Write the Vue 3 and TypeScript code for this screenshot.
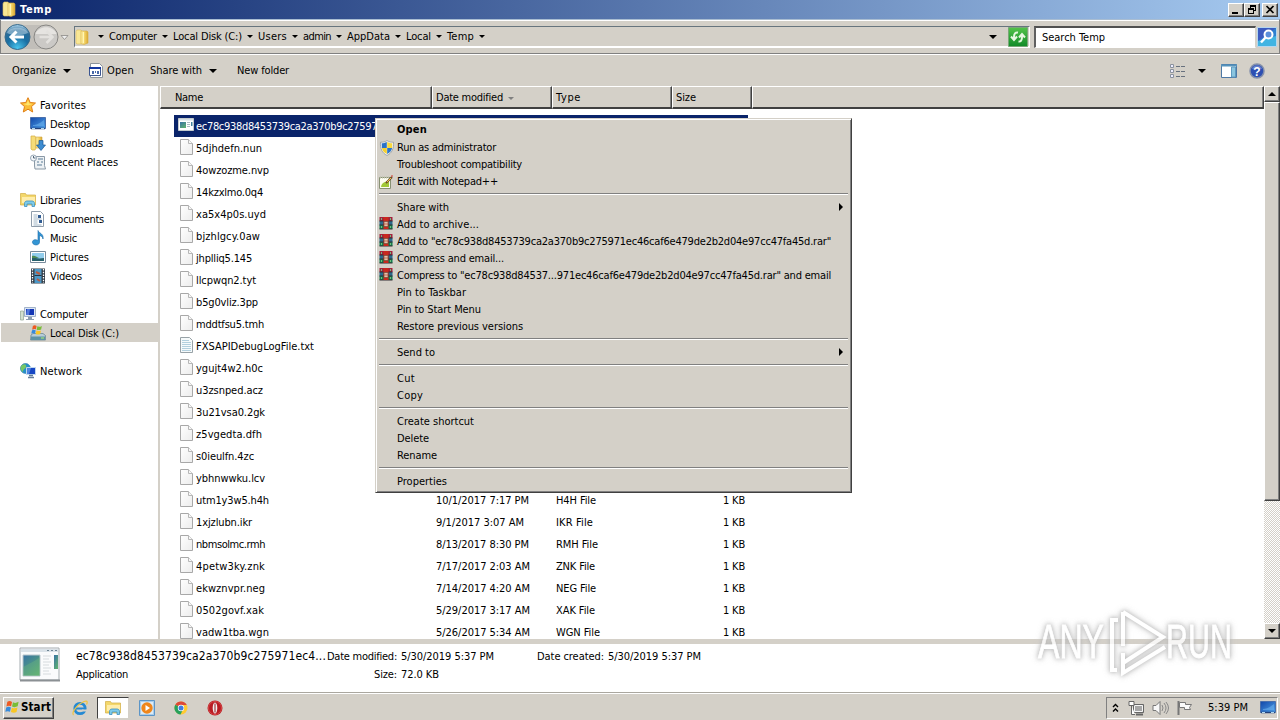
<script setup lang="ts">
interface Entry { name: string; w: number; icon: string; date?: string; dw?: number; type?: string; tw?: number }
interface Place { name: string; w: number; icon: string; child?: boolean; active?: boolean; gap?: boolean }
interface Item { label?: string; w?: number; icon?: string; bold?: boolean; arrow?: boolean; sep?: boolean }

// Spreads letters so that a label takes exactly the requested width.
const vFit = {
  mounted(el: HTMLElement, binding: { value: number }) {
    const range = document.createRange()
    range.selectNodeContents(el)
    const natural = range.getBoundingClientRect().width
    const count = (el.textContent ?? '').length
    if (count) el.style.letterSpacing = `${(binding.value - natural) / count}px`
  },
}

const crumbs = [
  { t: 'Computer', w: 48 }, { t: 'Local Disk (C:)', w: 69 }, { t: 'Users', w: 29 }, { t: 'admin', w: 28 },
  { t: 'AppData', w: 43 }, { t: 'Local', w: 25 }, { t: 'Temp', w: 27 },
]

const places: Place[] = [
  { name: 'Favorites', w: 46, icon: 'star' },
  { name: 'Desktop', w: 40, icon: 'desktop', child: true },
  { name: 'Downloads', w: 53, icon: 'downloads', child: true },
  { name: 'Recent Places', w: 68, icon: 'recent', child: true },
  { name: 'Libraries', w: 41, icon: 'library', gap: true },
  { name: 'Documents', w: 54, icon: 'document', child: true },
  { name: 'Music', w: 27, icon: 'music', child: true },
  { name: 'Pictures', w: 39, icon: 'picture', child: true },
  { name: 'Videos', w: 32, icon: 'video', child: true },
  { name: 'Computer', w: 48, icon: 'computer', gap: true },
  { name: 'Local Disk (C:)', w: 69, icon: 'disk', child: true, active: true },
  { name: 'Network', w: 42, icon: 'network', gap: true },
]

const files: Entry[] = [
  { name: 'ec78c938d8453739ca2a370b9c275971e', w: 193, icon: 'program' },
  { name: '5djhdefn.nun', w: 66, icon: 'blank' },
  { name: '4owzozme.nvp', w: 73, icon: 'blank' },
  { name: '14kzxlmo.0q4', w: 67, icon: 'blank' },
  { name: 'xa5x4p0s.uyd', w: 70, icon: 'blank' },
  { name: 'bjzhlgcy.0aw', w: 64, icon: 'blank' },
  { name: 'jhplliq5.145', w: 56, icon: 'blank' },
  { name: 'llcpwqn2.tyt', w: 60, icon: 'blank' },
  { name: 'b5g0vliz.3pp', w: 62, icon: 'blank' },
  { name: 'mddtfsu5.tmh', w: 68, icon: 'blank' },
  { name: 'FXSAPIDebugLogFile.txt', w: 118, icon: 'text' },
  { name: 'ygujt4w2.h0c', w: 67, icon: 'blank' },
  { name: 'u3zsnped.acz', w: 67, icon: 'blank' },
  { name: '3u21vsa0.2gk', w: 69, icon: 'blank' },
  { name: 'z5vgedta.dfh', w: 66, icon: 'blank' },
  { name: 's0ieulfn.4zc', w: 58, icon: 'blank' },
  { name: 'ybhnwwku.lcv', w: 69, icon: 'blank' },
  { name: 'utm1y3w5.h4h', w: 73, icon: 'blank', date: '10/1/2017 7:17 PM', dw: 93, type: 'H4H File', tw: 40 },
  { name: '1xjzlubn.ikr', w: 56, icon: 'blank', date: '9/1/2017 3:07 AM', dw: 88, type: 'IKR File', tw: 37 },
  { name: 'nbmsolmc.rmh', w: 69, icon: 'blank', date: '8/13/2017 8:30 PM', dw: 93, type: 'RMH File', tw: 42 },
  { name: '4petw3ky.znk', w: 69, icon: 'blank', date: '7/17/2017 2:03 AM', dw: 94, type: 'ZNK File', tw: 39 },
  { name: 'ekwznvpr.neg', w: 69, icon: 'blank', date: '7/14/2017 4:20 AM', dw: 94, type: 'NEG File', tw: 40 },
  { name: '0502govf.xak', w: 68, icon: 'blank', date: '5/29/2017 3:17 AM', dw: 94, type: 'XAK File', tw: 39 },
  { name: 'vadw1tba.wgn', w: 73, icon: 'blank', date: '5/26/2017 5:34 AM', dw: 94, type: 'WGN File', tw: 44 },
]

const menu: Item[] = [
  { label: 'Open', w: 30, bold: true },
  { label: 'Run as administrator', w: 99, icon: 'shield' },
  { label: 'Troubleshoot compatibility', w: 125 },
  { label: 'Edit with Notepad++', w: 101, icon: 'notepad' },
  { sep: true },
  { label: 'Share with', w: 52, arrow: true },
  { label: 'Add to archive...', w: 82, icon: 'rar' },
  { label: 'Add to "ec78c938d8453739ca2a370b9c275971ec46caf6e479de2b2d04e97cc47fa45d.rar"', w: 434, icon: 'rar' },
  { label: 'Compress and email...', w: 107, icon: 'rar' },
  { label: 'Compress to "ec78c938d84537...971ec46caf6e479de2b2d04e97cc47fa45d.rar" and email', w: 434, icon: 'rar' },
  { label: 'Pin to Taskbar', w: 69 },
  { label: 'Pin to Start Menu', w: 84 },
  { label: 'Restore previous versions', w: 126 },
  { sep: true },
  { label: 'Send to', w: 38, arrow: true },
  { sep: true },
  { label: 'Cut', w: 18 },
  { label: 'Copy', w: 26 },
  { sep: true },
  { label: 'Create shortcut', w: 77 },
  { label: 'Delete', w: 32 },
  { label: 'Rename', w: 40 },
  { sep: true },
  { label: 'Properties', w: 50 },
]
</script>

<template>
  <div class="screen">
    <svg class="defs" width="0" height="0" aria-hidden="true">
      <defs>
        <linearGradient id="gFolder" x1="0" x2="1"><stop offset="0" stop-color="#fff2a8" /><stop offset=".5" stop-color="#f3d468" /><stop offset="1" stop-color="#dba832" /></linearGradient>
        <linearGradient id="gBlue" x1="0" x2="1" y2="1"><stop offset="0" stop-color="#1247a8" /><stop offset="1" stop-color="#4da0e8" /></linearGradient>
        <linearGradient id="gGreen" y2="1" x2="0"><stop offset="0" stop-color="#53c34a" /><stop offset="1" stop-color="#118a28" /></linearGradient>
        <radialGradient id="gBack" cy=".95" r=".9"><stop offset="0" stop-color="#49c6ef" /><stop offset=".5" stop-color="#1a6fa3" /><stop offset=".8" stop-color="#2a6c98" /><stop offset="1" stop-color="#9ac4df" /></radialGradient>
        <linearGradient id="gPaper" x2="1" y2="1"><stop offset="0" stop-color="#fff" /><stop offset="1" stop-color="#ececec" /></linearGradient>
        <linearGradient id="gApp" x2=".7" y2="1"><stop offset="0" stop-color="#3873a5" /><stop offset="1" stop-color="#5cad72" /></linearGradient>
      </defs>
      <symbol id="folder" viewBox="0 0 16 16"><path d="M2 2.500 3 1h4l1 2v11l-1 1H3l-1-1z" fill="#f9e795" stroke="#dcbd5b" stroke-width=".6" /><path d="M7 2h6l1 1v11l-4 1.500-3-.7z" fill="url(#gFolder)" stroke="#d3ab40" stroke-width=".6" /><path d="M9.500 3v11" stroke="#fff5b5" /></symbol>
      <symbol id="star" viewBox="0 0 16 16"><path d="m8 .7 2.200 4.800 5.300.5-4 3.600 1.200 5.400L8 12.200 3.300 15l1.200-5.400-4-3.600 5.300-.5z" fill="#fbbd38" stroke="#e07f16" /><path d="m8 3 1.300 3.600 3.500.3-4.800 1.600-4.700-1.600 3.400-.3z" fill="#ffe56c" /></symbol>
      <symbol id="desktop" viewBox="0 0 16 16"><path d="M.5 1.500h15v11H.5z" fill="url(#gBlue)" stroke="#4a6fab" /><path d="M3 9c3 0 6-1 11-5v6H3z" fill="#6fb5ee" opacity=".55" /><path d="M1 12.500h14" stroke="#24427c" stroke-width="1.500" /><path d="M2 12.500h3m6 0h3" stroke="#b3d9ef" /></symbol>
      <symbol id="downloads" viewBox="0 0 16 16"><path d="M1 1h4l1 2v10l-1 2H2l-1-1z" fill="#f6dc78" stroke="#d4ad43" stroke-width=".7" /><path d="M6 2h6v11H6z" fill="url(#gFolder)" stroke="#d0a440" stroke-width=".6" /><path d="M9 5.500h4V10h2.500L11 15.500 6.500 10H9z" fill="#3d8cd1" stroke="#185795" stroke-width=".7" /></symbol>
      <symbol id="recent" viewBox="0 0 16 16"><path d="M4.500 2.500h10v9l1 3.500H5l-.5-3z" fill="#edf1f4" stroke="#8a99a6" /><circle cx="3.500" cy="4" r="3" fill="#f4f7fa" stroke="#98a7b5" /><path d="M3.500 2v2h2" fill="none" stroke="#506577" /><path d="M8 5h5M7 8h2m2 0h2M7 11h5" stroke="#8ba3b5" stroke-width="1.500" /></symbol>
      <symbol id="library" viewBox="0 0 16 16"><path d="M.5 1.500h5l1 1.500h9V13H.5z" fill="#f3d76b" stroke="#d3ad45" stroke-width=".7" /><path d="M2 5h13v6H2z" fill="#ffedaa" /><path d="M4.500 14.500v-3c0-1.500 1-2.500 2.500-2.500h5c1.500 0 2.500 1 2.500 2.500v3h-2.500V12h-5v2.500z" fill="#7ecbe9" stroke="#3d90c2" stroke-width=".8" /></symbol>
      <symbol id="document" viewBox="0 0 16 16"><path d="M1.500.5h9l3 3v12h-12z" fill="#fff" stroke="#8f9dab" /><path d="M3.500 4h4m-4 2h4m-4 2h8m-8 2h4m-4 2h4m-4 2h8" stroke="#8ba4b9" stroke-width=".8" /><path d="M8 4h3v3H8zm1 5h3v3H9z" fill="#315c93" /></symbol>
      <symbol id="music" viewBox="0 0 16 16"><path d="M8 .5c1 3 6 3 5 8.500-.5-2.500-2-3-3.500-3.500V12c0 4.500-8 3.500-7-.5.500-2 3.500-2.500 5.500-1z" fill="#3395d4" stroke="#1769a8" stroke-width=".6" /></symbol>
      <symbol id="picture" viewBox="0 0 16 16"><path d="M.5 2.500h15v11H.5z" fill="#fff" stroke="#788b9b" /><path d="M2 4h12v8H2z" fill="#92cdec" /><path d="M2 8c4 1 6 2 12 1v3H2z" fill="#27616c" /><path d="M2 7c3-1 4 1 7 2H2z" fill="#4e8b53" /></symbol>
      <symbol id="video" viewBox="0 0 16 16"><path d="M1 .5h14v15H1z" fill="#303a45" /><path d="M4.500 1h7v14h-7z" fill="#4b98c8" /><path d="M4.500 7.500h7" stroke="#29323e" /><path d="m6 4 4 2M7 11l3 2" stroke="#b85c42" stroke-width="2" /><path d="M2.500 1v14M13.500 1v14" stroke="#fff" stroke-width="1.300" stroke-dasharray="1.500 1.200" /></symbol>
      <symbol id="computer" viewBox="0 0 16 16"><path d="M.5 5h3v9h-3z" fill="#d3e0d0" stroke="#8fa593" stroke-width=".7" /><path d="M4.500 1.500h11v9h-11z" fill="#dbe6f5" stroke="#a3b3c9" /><path d="M6 3h8v6H6z" fill="#1436b5" /><path d="M7 3h3L9 9H6z" fill="#5179dc" /><path d="M8 11h4v2h2v1H6v-1h2z" fill="#8b9db1" /></symbol>
      <symbol id="flag" viewBox="0 0 16 16"><path d="M2.500 2.500C5 1 6 2 7.500 2.700L6.500 7.300C5 6.600 3.500 6.500 1.500 7.500z" fill="#ee5a22" /><path d="M8.500 3c2 1 3.500.8 6-.5l-1 4.800c-2 1-4 1.200-6 .2z" fill="#79bd37" /><path d="M1.300 8.500c2-1 3.500-.8 5 0l-1 4.500C4 12.300 2.300 12.200.3 13z" fill="#368bdc" /><path d="M7.300 8.700c2 .9 4 .7 6-.2l-1 4.800c-2 1-4 .9-6-.1z" fill="#f9c623" /></symbol>
      <symbol id="disk" viewBox="0 0 16 16"><path d="M1 10 3 8.500h10l2.500 2v4.500H.5z" fill="#b7ccd8" stroke="#607f8e" stroke-width=".7" /><path d="M1 11.500h14V15H1z" fill="#5e93a5" /><path d="M11 13h3" stroke="#aef26b" /><use href="#flag" x="1" y="-1" width="12" height="12" /></symbol>
      <symbol id="network" viewBox="0 0 16 16"><circle cx="5.500" cy="5.500" r="5" fill="#258fc9" stroke="#2876a7" stroke-width=".6" /><path d="M2 2c3-2 5 0 4 2S3 6 3 9C0 7 0 4 2 2" fill="#76c765" /><path d="M6.500 4.500h9v7h-9z" fill="#1747c4" stroke="#c0d7ee" /><path d="m7 5 4 0-2 6H7z" fill="#4c83e0" /><path d="M9 12.500h4M8 14.500h6" stroke="#667f9b" stroke-width="1.500" /></symbol>
      <symbol id="blank" viewBox="-1 0 16 16"><path d="M1.500.5h8l4 4v11h-12z" fill="url(#gPaper)" stroke="#a8a8a8" /><path d="M9.500.5v4h4" fill="#f8f8f8" stroke="#b7b7b7" /></symbol>
      <symbol id="text" viewBox="-1 0 16 16"><path d="M1.500.5h9l3 3v12h-12z" fill="#f6fafb" stroke="#98a2a7" /><path d="M3 3.500h7m-7 2h9m-9 2h9m-9 2h9m-9 2h9m-9 2h9" stroke="#b3d0de" /></symbol>
      <symbol id="program" viewBox="0 0 16 16"><path d="M.5 1.500h15v12H.5z" fill="#fff" stroke="#c3cacd" /><path d="M1 2h14v1.500H1z" fill="#d5e0e5" /><path d="M2 5h6v6H2z" fill="url(#gApp)" /><path d="M9 5.500h3m-3 2h3m-3 2h3" stroke="#aabac2" /><path d="M13 5h1.500v4H13z" fill="#4385a0" /></symbol>
      <symbol id="shield" viewBox="0 0 16 16"><path d="M8 .6c2 1.300 4 1.700 6.500 1.600.5 6-1.500 11-6.500 13.200C3 13.200 1 8.200 1.500 2.200 4 2.300 6 1.900 8 .6z" fill="#f4f5f5" stroke="#848b90" stroke-width=".7" /><path d="M7.800 2C6 3 4.500 3.300 2.700 3.300L2.900 8h4.900z" fill="#2a72c7" /><path d="M8.200 2c1.800 1 3.300 1.300 5.100 1.300L13.100 8H8.200z" fill="#f9d83c" /><path d="M2.900 8h4.900v6C5 12.700 3.300 10.500 2.900 8z" fill="#f5d02f" /><path d="M8.200 8h4.900c-.4 2.500-2.100 4.700-4.900 6z" fill="#2c75c8" /></symbol>
      <symbol id="notepad" viewBox="0 0 14 14"><path d="M.5 2.500h11v11H.500z" fill="#fcfdf0" stroke="#889174" /><path d="M2 12c1-5 4-5 8-6v6z" fill="#a2c938" /><path d="M1 2.500h10" stroke="#b8bca5" stroke-width="2" stroke-dasharray="1 1" /><path d="m7 8 6-6" stroke="#704d26" stroke-width="2" /><path d="m8 7 4-4" stroke="#f3bd4d" /><path d="m12 1 1-1 1 1-1 1z" fill="#d43c33" /></symbol>
      <symbol id="rar" viewBox="0 0 14 13"><path d="M.5 0h13v4H.5z" fill="#a3213c" /><path d="M.5 4h13v4H.5z" fill="#2a6a8c" /><path d="M.5 8h13v4H.5z" fill="#128050" /><path d="M.5 4h13M.5 8h13M.5 12h13" stroke="#332d32" /><path d="M4.500 0h5v12h-5z" fill="#c9281d" /><path d="M5 4.500h4v5H5z" fill="#f3e6d8" stroke="#5d3b25" stroke-width=".6" /><path d="M6 5.500v3m2-3v3" stroke="#b64829" /><path d="M2.500 1v2m9-2v2m-9 6v2m9-2v2" stroke="#73ba7b" /></symbol>
      <symbol id="bigapp" viewBox="0 0 42 36"><path d="M1 1h39v32H1z" fill="#fafbfc" stroke="#a5acb0" /><path d="M1 33.500h40" stroke="#8b9094" stroke-width="2" /><path d="M2 2h37v3H2z" fill="#dae2e8" /><path d="M28 3.500h2m2 0h2m2 0h2" stroke="#6d8494" /><path d="M4 8h17v21H4z" fill="url(#gApp)" stroke="#b9c6cc" /><path d="M4 20C9 17 15 15 21 10v19H4z" fill="#71bb7f" opacity=".35" /><path d="M24 9h8m-8 3h6m-6 3h8m-8 3h6m-6 3h8m-8 3h6m-6 3h8" stroke="#d6dbde" /><path d="M35 8h4v14h-4z" fill="url(#gApp)" /></symbol>
      <symbol id="ie" viewBox="0 0 16 16"><circle cx="8" cy="8.500" r="5.200" fill="none" stroke="#2489d3" stroke-width="2.800" /><path d="M4 8.500h9" stroke="#2489d3" stroke-width="2" /><path d="M10 10.500h5" stroke="#d4d0c8" stroke-width="2" /><path d="M1.500 15C-1 12 6 4 12 1.500c4-1.500 3.500 1 2.500 3" fill="none" stroke="#eec340" stroke-width="1.200" /></symbol>
      <symbol id="player" viewBox="0 0 16 16"><path d="M.5.500h15v15H.5z" fill="#a9cdeb" stroke="#5c95c7" /><path d="M2 2h12v12H2z" fill="#dcebf6" /><circle cx="8" cy="8" r="5.700" fill="#ef861b" /><path d="m6.500 5 4.500 3-4.500 3z" fill="#fff" /></symbol>
      <symbol id="chrome" viewBox="0 0 16 16"><circle cx="8" cy="8" r="6.500" fill="#ffca32" /><path d="M8 8 2.300 4.700A6.500 6.500 0 0 1 13.800 5H8z" fill="#dd4938" /><path d="M2.300 4.700A6.500 6.500 0 0 0 7.500 14.500L10 9.500 8 8z" fill="#27a05b" /><circle cx="8" cy="8" r="3.200" fill="#fff" /><circle cx="8" cy="8" r="2.500" fill="#417dde" /></symbol>
      <symbol id="opera" viewBox="0 0 16 16"><circle cx="8" cy="8" r="7.500" fill="#b91b22" /><circle cx="8" cy="8" r="6.500" fill="none" stroke="#dc5352" stroke-width=".8" /><ellipse cx="8" cy="8" rx="2.300" ry="5.500" fill="#f3eeee" /><path d="M8 3.500v9" stroke="#8b1b20" stroke-width="1" /></symbol>
    </svg>

    <header class="title">
      <svg class="i16"><use href="#folder" /></svg>
      <span v-fit="32" class="bold">Temp</span>
      <div class="winbtns">
        <i class="wb"><svg width="10" height="9"><path d="M1 7h6v2H1z" /></svg></i>
        <i class="wb"><svg width="10" height="9"><path d="M3 0h6v2H4v1H3zm5 2h1v4H7V5h1zM1 3h6v2H2v3h4V5h1v4H1z" /></svg></i>
        <i class="wb close"><svg width="10" height="9"><path d="m1.500 1 7 7m0-7-7 7" stroke="#000" stroke-width="1.700" /></svg></i>
      </div>
    </header>

    <section class="nav">
      <svg class="round" width="72" height="30" viewBox="0 0 72 30">
        <path d="M17 3h30q-5 12 0 24H17z" fill="#c1beb9" />
        <circle cx="17" cy="15" r="12.500" fill="url(#gBack)" stroke="#386a8b" />
        <path d="M6.500 11C9 4 25 4 27.500 11 20 14 13 14 6.500 11z" fill="#dcecf6" opacity=".45" />
        <path d="M16 9.500 10.500 15l5.500 5.500M11 15h12.500" fill="none" stroke="#fff" stroke-width="3" />
        <circle cx="45.500" cy="15" r="12" fill="#cbc9c6" stroke="#888784" />
        <path d="M35 12c3-9 18-9 21 0z" fill="#e6e4e1" /><path d="m46 9 6 6-6 6m5-6H39" fill="none" stroke="#e3e1de" stroke-width="2.500" />
        <path d="M60.500 13.500h7L64 17.500z" fill="#eee" stroke="#8b8986" stroke-width=".8" />
      </svg>
      <div class="address">
        <svg class="i16"><use href="#folder" /></svg>
        <i class="down first"></i>
        <template v-for="c in crumbs" :key="c.t"><span v-fit="c.w" class="crumb" :style="{ width: c.w + 'px' }">{{ c.t }}</span><i class="down"></i></template>
        <i class="down large end"></i>
      </div>
      <svg class="refresh" width="21" height="20"><path d="M.5.500h19v19H.5z" fill="url(#gGreen)" stroke="#78a777" /><path d="M10 5.500Q6 5 6 10v2m-3-2.500 3 3.500 3-3.500M10.500 14.500Q14 15 14 10V8m-3 2.500L14 7l3 3.500" fill="none" stroke="#e5f7df" stroke-width="2" /></svg>
      <div class="search"><span v-fit="63">Search Temp</span></div>
      <svg class="find" width="20" height="20"><path d="M.5.500h19v19H.5z" fill="#2e80d0" stroke="#b5d6ee" /><path d="M1 1h18L1 14z" fill="#3c5bbf" /><path d="M1 14 19 9v10H1z" fill="#42b4e2" /><circle cx="11.500" cy="7.500" r="4" fill="#5b8fdb" stroke="#fff" stroke-width="2" /><path d="m8.500 10.500-4.500 5" stroke="#fff" stroke-width="2.500" /></svg>
    </section>

    <section class="toolbar">
      <span v-fit="44" class="organize">Organize</span><i class="down large"></i>
      <svg class="openicon" width="14" height="15"><path d="M1.500.5h9l3 3v11h-12z" fill="#fff" stroke="#8c949b" /><path d="M.5 4.500h11v8H.5z" fill="#fff" stroke="#3a5590" /><path d="M0 5h12" stroke="#1438a0" stroke-width="2" /><path d="M3 8h2v3H3zm3 0h1v2H6zm2 0h2v3H8z" fill="#4768a8" /></svg>
      <span v-fit="27" class="topen">Open</span>
      <span v-fit="52" class="share">Share with</span><i class="down large"></i>
      <span v-fit="52" class="newf">New folder</span>
      <div class="tools">
        <svg width="16" height="14"><path d="M.5.500h3v3h-3zm0 5h3v3h-3zm0 5h3v3h-3z" fill="#eef" stroke="#8b929f" /><path d="M6 2.500h4m1 0h4M6 7.500h4m1 0h4M6 12.500h4m1 0h4" stroke="#68717e" /></svg>
        <i class="down large"></i>
        <svg width="16" height="14"><path d="M.5.500h15v13H.5z" fill="#fff" stroke="#4d78a5" /><path d="M0 1.500h16" stroke="#5593bc" stroke-width="2" /><path d="M10.500 3h4v10h-4z" fill="#8bc5df" stroke="#5e9ac0" /></svg>
        <svg width="16" height="16"><circle cx="8" cy="8" r="7" fill="#2d4fb2" stroke="#8490ab" stroke-width="1.500" /><path d="M3 6c1-5 9-5 10 0z" fill="#839dde" opacity=".6" /><text x="8" y="12.500" text-anchor="middle" class="q">?</text></svg>
      </div>
    </section>

    <main class="body">
      <nav class="side">
        <div v-for="p in places" :key="p.name" class="place" :class="{ child: p.child, active: p.active, gap: p.gap }">
          <svg class="i16"><use :href="'#' + p.icon" /></svg><span v-fit="p.w">{{ p.name }}</span>
        </div>
      </nav>
      <div class="divider"></div>
      <section class="pane">
        <div class="heads">
          <div class="h name"><span v-fit="28">Name</span></div>
          <div class="h date"><span v-fit="67">Date modified</span><i class="down sort"></i></div>
          <div class="h type"><span v-fit="25">Type</span></div>
          <div class="h size"><span v-fit="20">Size</span></div>
          <div class="h rest"></div>
        </div>
        <div class="rows">
          <div v-for="(f, i) in files" :key="f.name" class="row" :class="{ selected: i === 0 }">
            <div class="fn"><svg class="i16"><use :href="'#' + f.icon" /></svg><span v-fit="f.w">{{ f.name }}</span></div>
            <template v-if="f.date">
              <span class="cell"><span v-fit="f.dw">{{ f.date }}</span></span>
              <span class="cell"><span v-fit="f.tw">{{ f.type }}</span></span>
              <span class="cell right"><span v-fit="22">1 KB</span></span>
            </template>
          </div>
        </div>
      </section>
      <div class="scroll">
        <i class="sb"><svg width="8" height="4"><path d="M0 4h8L4 0z" /></svg></i>
        <i class="thumb"></i>
        <i class="track"></i>
        <i class="sb"><svg width="8" height="4"><path d="M0 0h8L4 4z" /></svg></i>
      </div>
    </main>

    <section class="details">
      <svg class="big" width="42" height="36"><use href="#bigapp" /></svg>
      <div class="dcol one"><span v-fit="250" class="bigname">ec78c938d8453739ca2a370b9c275971ec4...</span><span v-fit="52">Application</span></div>
      <div class="dcol two">
        <div><span v-fit="70">Date modified:</span><span v-fit="93" class="val">5/30/2019 5:37 PM</span></div>
        <div class="sz"><span v-fit="23">Size:</span><span v-fit="38" class="val">72.0 KB</span></div>
      </div>
      <div class="dcol three"><div><span v-fit="67">Date created:</span><span v-fit="93" class="val">5/30/2019 5:37 PM</span></div></div>
    </section>

    <footer class="task">
      <button class="start"><svg class="flag"><use href="#flag" /></svg><span v-fit="30" class="bold">Start</span></button>
      <span class="tb"><svg class="i16"><use href="#ie" /></svg></span>
      <span class="tb pressed"><svg class="i16"><use href="#library" /></svg></span>
      <span class="tb"><svg class="i16"><use href="#player" /></svg></span>
      <span class="tb"><svg class="i16"><use href="#chrome" /></svg></span>
      <span class="tb"><svg class="i16"><use href="#opera" /></svg></span>
      <div class="tray">
        <svg class="chev" width="7" height="10"><path d="m1 4 2.500-2.500L6 4M1 8.500 3.500 6 6 8.500" fill="none" stroke="#000" stroke-width="1.400" /></svg>
        <svg width="17" height="16"><path d="M5.500 4.500h10v8h-10z" fill="#a7a7a7" stroke="#666" /><path d="M6.500 5.500h8v6h-8z" fill="none" stroke="#f5f5f5" /><path d="M8 14.500h7" stroke="#666" stroke-width="2" /><path d="M1 1.500h5v4H1zM3.500 5v9.500H7" fill="#fff" stroke="#666" /></svg>
        <svg width="17" height="16"><path d="M1 5.500h3l4-4v13l-4-4H1z" fill="#f8f8f8" stroke="#777" /><path d="M10 5q2 3 0 6m2-8q4 5 0 10m2-11q5 6 0 12" fill="none" stroke="#888" /></svg>
        <svg width="17" height="16"><path d="M2.500 1v14" stroke="#777" stroke-width="2" /><path d="M3.500 2.500h6v2h6l-2 3 1 2h-6v-2h-5z" fill="#fafafa" stroke="#777" /></svg>
        <span v-fit="40" class="clock">5:39 PM</span>
        <svg class="i16"><use href="#desktop" /></svg>
      </div>
    </footer>

    <div class="menu">
      <template v-for="(m, i) in menu" :key="i">
        <div v-if="m.sep" class="sep"></div>
        <div v-else class="mi" :class="{ bold: m.bold, tall: m.bold }">
          <span class="mic"><svg v-if="m.icon" :class="m.icon"><use :href="'#' + m.icon" /></svg></span>
          <span v-fit="m.w">{{ m.label }}</span>
          <svg v-if="m.arrow" class="arr" width="4" height="8"><path d="M0 0v8l4-4z" /></svg>
        </div>
      </template>
    </div>

    <svg class="mark" width="240" height="90" viewBox="0 0 240 90">
      <g class="glow">
        <text x="8" y="57" textLength="66" lengthAdjust="spacingAndGlyphs">ANY</text>
        <text x="136" y="57" textLength="66" lengthAdjust="spacingAndGlyphs">RUN</text>
        <path d="M93 11v34M93 11l40 25-40 26" /><path d="M88 19h-6v50h5M93 52v20l42-26" />
      </g>
    </svg>
  </div>
</template>

<style>
html, body { margin: 0; overflow: hidden; }
</style>

<style scoped>
.screen { position: relative; width: 1280px; height: 720px; overflow: hidden; display: flex; flex-direction: column; background: #d4d0c8; color: #000; font: 11px/14px "DejaVu Sans Condensed", "DejaVu Sans", sans-serif; font-stretch: condensed; white-space: nowrap; }
.screen * { box-sizing: border-box; }
.defs { position: absolute; }
svg { display: block; flex: none; }
i { flex: none; display: block; }
.i16 { width: 16px; height: 16px; }
.bold { font-weight: bold; }
.down { width: 0; height: 0; border: 3px solid transparent; border-top-color: #000; border-bottom: 0; }
.down.large { border-width: 4px 4px 0; }

.title { height: 19px; flex: none; display: flex; align-items: center; gap: 3px; padding: 0 2px 1px; color: #fff; background: linear-gradient(90deg, #0a246a, #a6caf0); }
.title > span { padding-top: 1px; }
.title > .i16 { margin-left: -1px; }
.winbtns { display: flex; margin-left: auto; padding-top: 1px; }
.wb { width: 16px; height: 14px; display: flex; align-items: center; justify-content: center; background: #d4d0c8; border: 1px solid; border-color: #fff #404040 #404040 #fff; box-shadow: inset -1px -1px #808080; }
.close { margin-left: 2px; }
.nav { height: 35px; flex: none; display: flex; align-items: flex-start; padding: 5px 2px 0 4px; border: 1px solid #808080; border-top-color: #a9bdd2; border-bottom: 1px solid #808080; box-shadow: inset 0 1px #fff, 0 1px #fff; }
.round { margin: -3px 0 0 -6px; width: 75px; }
.address { width: 956px; height: 22px; margin-top: 1px; display: flex; align-items: center; padding-right: 32px; border: 1px solid; border-color: #67757e #fff #fff #67757e; border-bottom-width: 2px; }
.address > .i16 { margin-left: -1px; }
.address .first { margin: 0 5px 0 8px; }
.address .crumb + .down { margin: 0 5px 0 5px; }
.address .down.end { margin-left: auto; margin-right: 0; margin-top: 1px; }
.refresh { margin: 2px 5px 0 -22px; }
.search { width: 222px; height: 22px; margin-top: 1px; padding: 3px 0 0 6px; background: #fff; border: 2px solid; border-width: 2px 1px 1px 2px; border-color: #505050 #d4d0c8 #fff #606060; }
.find { margin: 2px 0 0 1px; }
.toolbar { height: 32px; flex: none; display: flex; align-items: center; padding: 1px 15px 0 12px; }
.organize + .down { margin-left: 7px; }
.openicon { margin: 0 4px 0 18px; }
.share { margin-left: 16px; }
.share + .down { margin-left: 7px; }
.newf { margin-left: 20px; }
.tools { margin-left: auto; display: flex; align-items: center; gap: 12px; }
.tools .down + svg { margin-left: 3px; }
.q { font: bold 12px "Liberation Sans", sans-serif; fill: #fff; }

.body { height: 553px; flex: none; display: flex; }
.side { width: 158px; background: #fff; padding-top: 9px; }
.place { height: 19px; display: flex; align-items: center; gap: 4px; padding-left: 20px; }
.place span { padding-top: 2px; }
.place.child { padding-left: 30px; }
.place.gap { margin-top: 19px; }
.place.active { margin-left: 1px; padding-left: 29px; background: #d4d0c8; }
.divider { width: 2px; background: #d4d0c8; }
.pane { flex: 1; min-width: 0; background: #fff; display: flex; flex-direction: column; overflow: hidden; }
.heads { display: flex; height: 23px; flex: none; background: #d4d0c8; }
.h { display: flex; align-items: center; padding: 2px 0 0 5px; border: 1px solid; border-color: #fff #404040 #404040 #fff; border-bottom-width: 2px; box-shadow: inset -1px 0 #808080; }
.name { width: 272px; padding-left: 14px; }
.date { width: 120px; padding-left: 3px; }
.type { width: 120px; padding-left: 3px; }
.size { width: 80px; padding-left: 3px; }
.rest { flex: 1; }
.sort { margin-left: 5px; border-top-color: #808080; }
.rows { padding: 6px 0 0 14px; }
.row { width: 574px; height: 22px; display: grid; grid-template-columns: 262px 120px 120px 69px; align-items: center; }
.fn { display: flex; align-items: center; gap: 2px; padding-left: 4px; width: 262px; height: 22px; overflow: hidden; }
.fn svg { margin-bottom: 2px; }
.fn span, .cell { padding-top: 1px; }
.selected { background: #0a246a; color: #fff; }
.right { text-align: right; }
.scroll { width: 16px; display: flex; flex-direction: column; }
.sb, .thumb { background: #d4d0c8; border: 1px solid; border-color: #fff #404040 #404040 #fff; box-shadow: inset -1px -1px #808080; }
.sb { height: 16px; display: flex; align-items: center; justify-content: center; }
.thumb { height: 399px; }
.track { flex: 1; background: repeating-conic-gradient(#fff 0 25%, #d4d0c8 0 50%) 0 0 / 2px 2px; }

.details { height: 53px; flex: none; display: flex; padding-top: 10px; background: #fff; border-top: 5px solid #d4d0c8; }
.big { margin: -7px 0 0 19px; }
.dcol { display: flex; flex-direction: column; gap: 4px; align-items: flex-start; margin-top: -4px; }
.one { width: 250px; margin-left: 15px; margin-right: 1px; }
.bigname { font-size: 12px; margin-top: -1px; padding-bottom: 1px; }
.two { width: 210px; }
.val { margin-left: 4px; }
.sz { margin-left: 47px; }
.task { flex: 1; display: flex; align-items: center; border-top: 1px solid #aaa79f; box-shadow: inset 0 1px #fff; padding: 2px 2px 0 3px; }
.start { width: 51px; height: 22px; display: flex; align-items: center; gap: 1px; padding: 0 0 1px 1px; margin-right: 9px; color: #000; font: bold 11.5px/14px "DejaVu Sans Condensed", "DejaVu Sans", sans-serif; background: #d4d0c8; border: 1px solid; border-color: #fff #404040 #404040 #fff; box-shadow: inset -1px -1px #808080; }
.flag { width: 15px; height: 16px; }
.tb { width: 34px; height: 22px; display: flex; align-items: center; justify-content: center; }
.tb.pressed { width: 32px; margin: 0 1px 0 0; background: #fff; border: 1px solid; border-color: #404040 #d4d0c8 #d4d0c8 #404040; }
.tray { margin-left: auto; width: 172px; height: 22px; display: flex; align-items: center; gap: 7px; padding-left: 4px; border: 1px solid; border-color: #808080 #fff #fff #808080; }
.chev { margin: 0 2px 0 1px; }
.clock { margin: 0 2px 0 8px; width: 43px; }

.menu { position: absolute; left: 375px; top: 118px; width: 477px; height: 375px; padding: 2px; background: #d4d0c8; border: 1px solid; border-color: #d4d0c8 #404040 #404040 #d4d0c8; box-shadow: inset 1px 1px #fff, inset -1px -1px #808080; }
.mi { height: 17px; display: flex; align-items: center; padding-left: 1px; }
.mi.tall { height: 17px; margin-bottom: 1px; }
.mic { width: 18px; height: 16px; display: flex; align-items: center; }
.mic svg { width: 14px; height: 14px; }
.mic svg.rar { height: 13px; margin-bottom: 2px; }
.mic .shield { width: 16px; height: 16px; }
.arr { margin: 0 6px 1px auto; }
.sep { height: 2px; margin: 3px 1px 4px; border-top: 1px solid #808080; border-bottom: 1px solid #fff; }
.mark { position: absolute; left: 1030px; top: 601px; }
.glow { fill: #fff; stroke: #fff; stroke-width: .8; opacity: .8; filter: drop-shadow(0 0 2px #aaa) drop-shadow(0 0 3px #ccc); }
.glow text { font: 48px "Liberation Sans", sans-serif; }
.glow path { fill: none; stroke-width: 4; }
</style>
